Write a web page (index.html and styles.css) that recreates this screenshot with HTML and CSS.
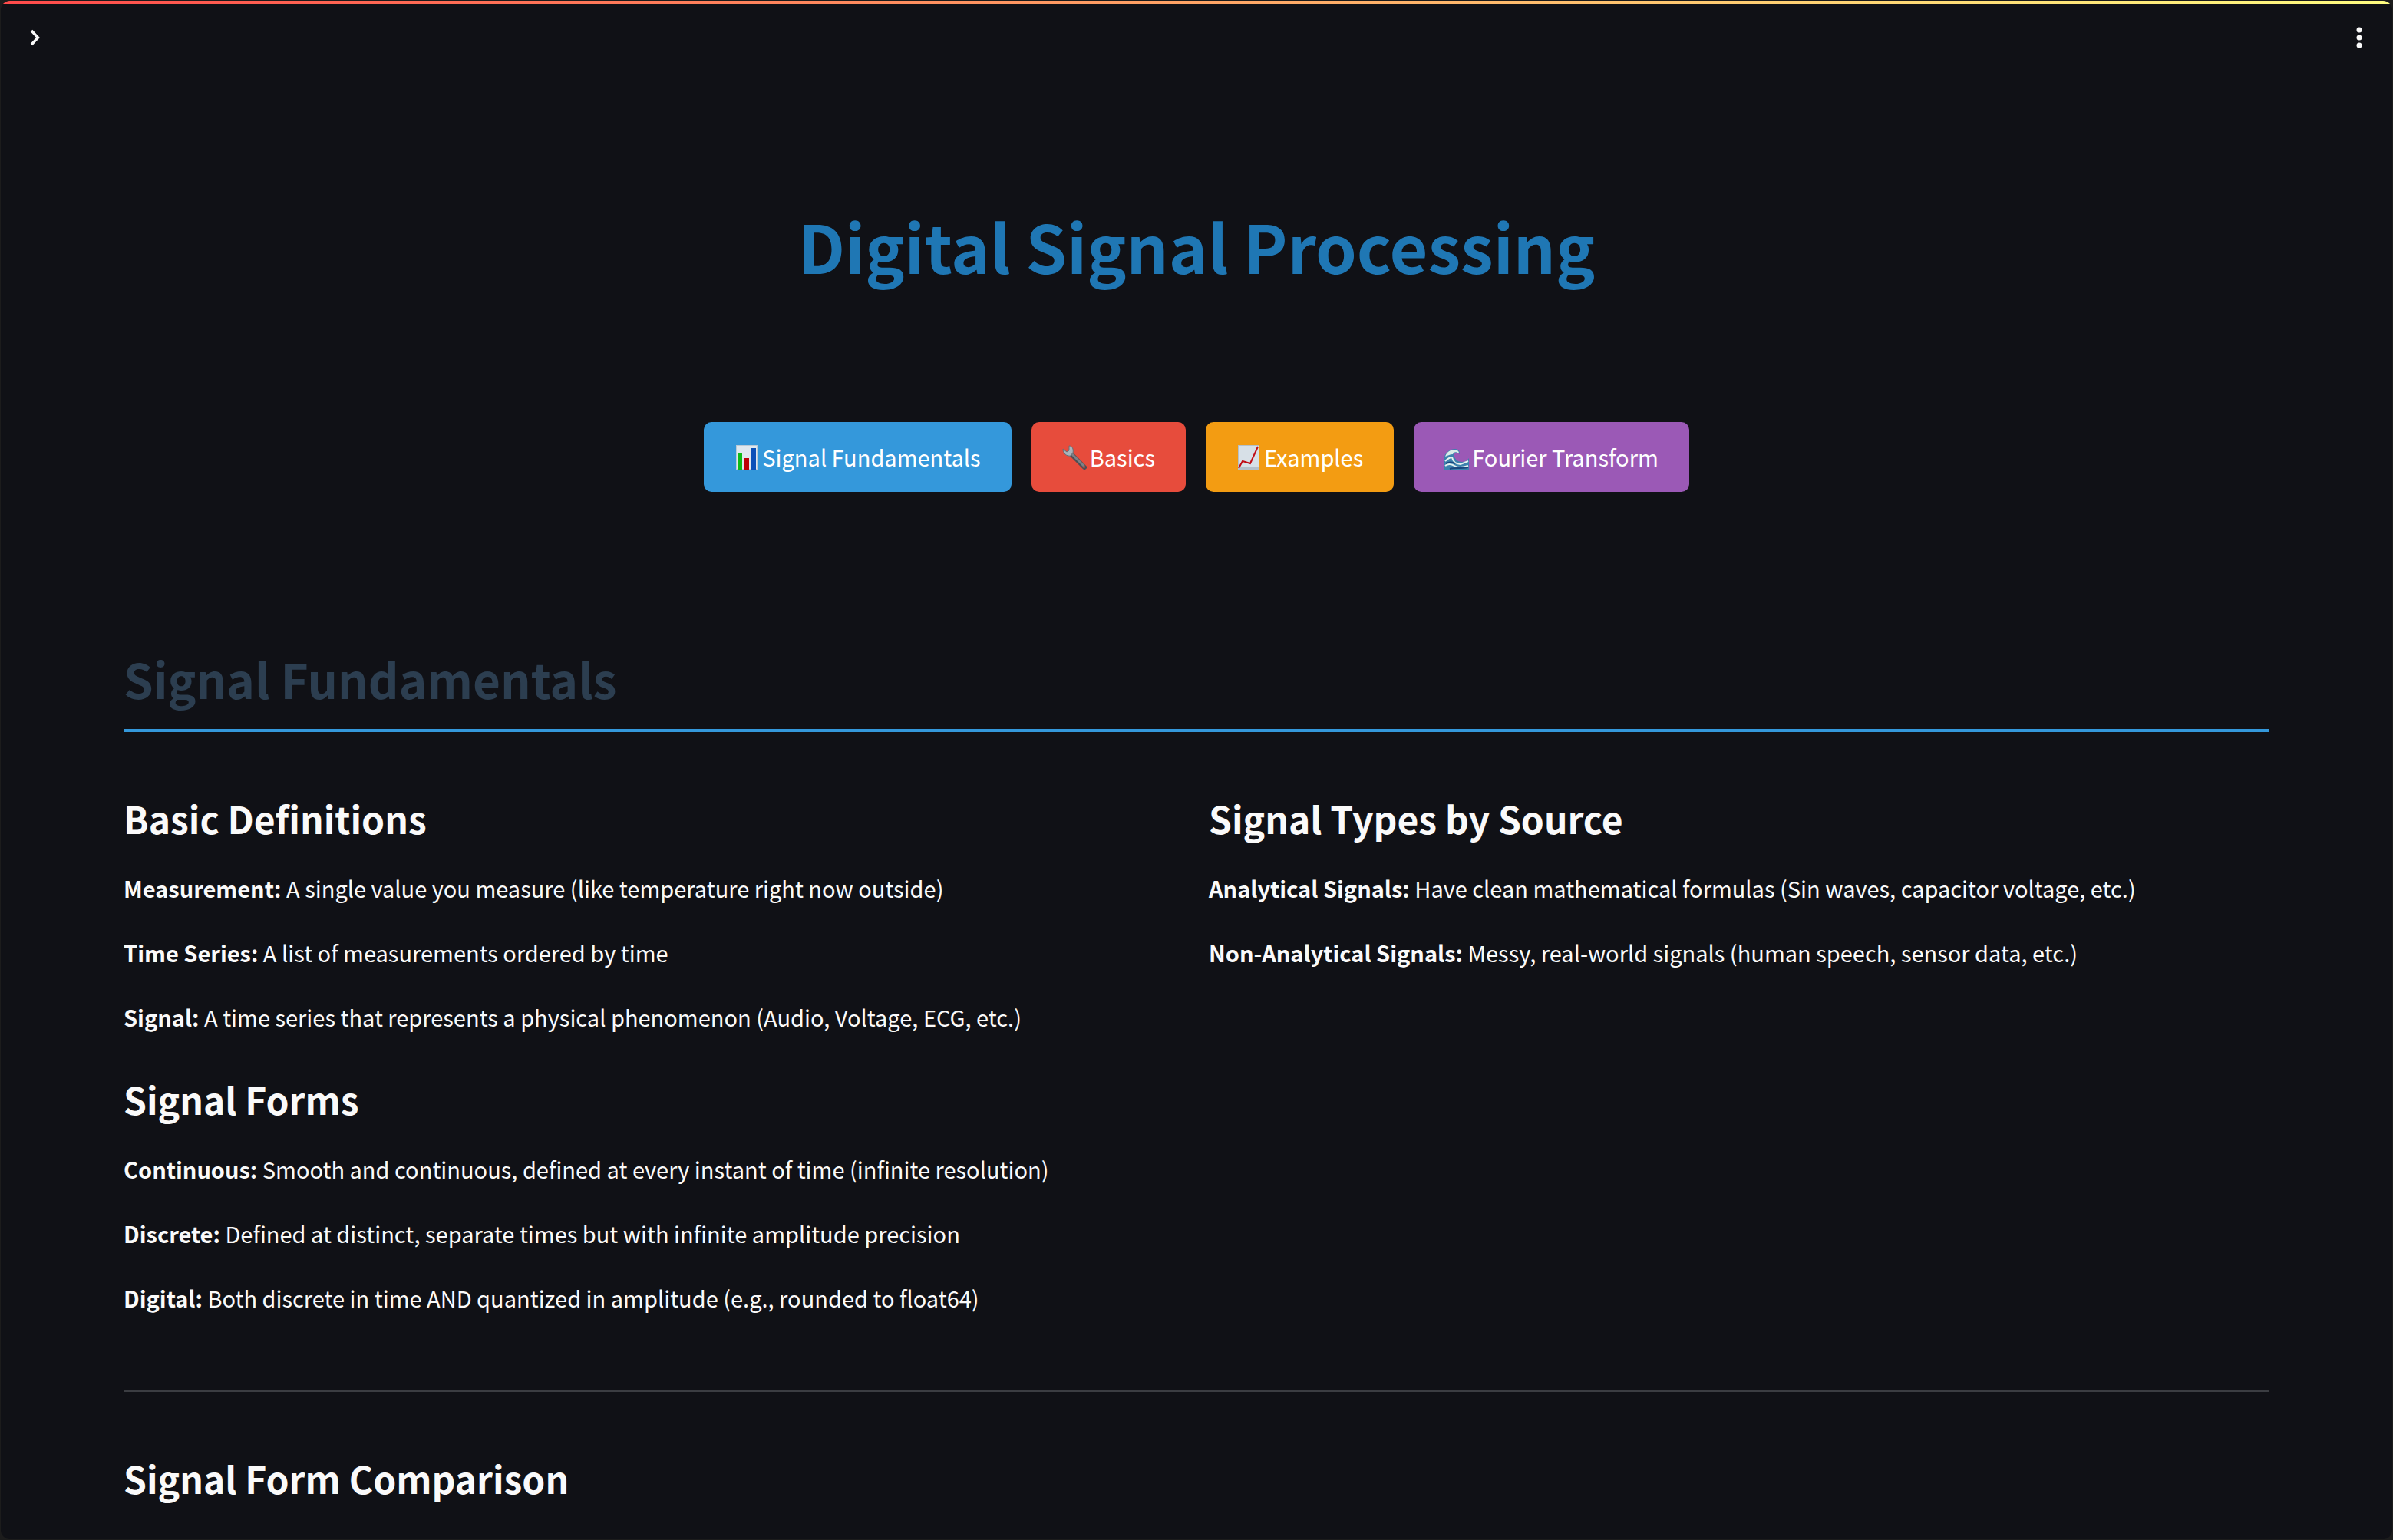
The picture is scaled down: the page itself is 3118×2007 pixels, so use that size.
FILE: index.html
```html
<!DOCTYPE html>
<html lang="en">
<head>
    <meta charset="UTF-8">
    <meta name="viewport" content="width=device-width, initial-scale=1.0">
    <title>Digital Signal Processing</title>
    <link rel="stylesheet" href="styles.css">
</head>
<body>
    <div class="app">
        <div class="decoration"></div>
        <header class="toolbar">
            <button type="button" class="icon-button" aria-label="Open sidebar">
                <svg width="40" height="40" viewBox="0 0 40 40"><path d="M17 11l8.500 9-8.500 9" fill="none" stroke="#fafafa" stroke-width="3.500"/></svg>
            </button>
            <button type="button" class="icon-button" aria-label="Main menu">
                <svg width="40" height="40" viewBox="0 0 40 40" fill="#fafafa"><circle cx="20" cy="10" r="3.500"/><circle cx="20" cy="20" r="3.500"/><circle cx="20" cy="30" r="3.500"/></svg>
            </button>
        </header>

        <main class="content">
            <h1>Digital Signal Processing</h1>

            <nav class="nav">
                <a href="#signal-fundamentals" class="nav-link blue">
                    <svg class="emoji" viewBox="0 0 32 32">
                        <rect x="2" width="28" height="32" fill="#b9c9d6"/>
                        <rect x="3" y="1" width="26" height="30" fill="#dfe8ef"/>
                        <rect x="4" y="11" width="6" height="21" fill="#0dbb17"/>
                        <rect x="13" y="17" width="6" height="15" fill="#bd0006"/>
                        <rect x="22" y="4" width="6" height="28" fill="#0b50b8"/>
                    </svg>
                    Signal Fundamentals
                </a>
                <a href="#basics" class="nav-link red">
                    <svg class="emoji" viewBox="0 0 32 32">
                        <path d="M11 11L29 29" stroke="#4c4f54" stroke-width="6" stroke-linecap="round"/>
                        <path d="M11 10L28 27" stroke="#7d8186" stroke-width="3" stroke-linecap="round"/>
                        <path d="M1 5l5 4 3-2V1c4 0 6 4 5 9l-3 4C6 15 1 11 1 5z" fill="#a9b4bb" stroke="#667078"/>
                        <circle cx="28.500" cy="28.500" r="1.500" fill="#c0493e"/>
                    </svg>
                    Basics
                </a>
                <a href="#examples" class="nav-link orange">
                    <svg class="emoji" viewBox="0 0 32 32">
                        <rect x="2" width="28" height="32" fill="#b4c0ca"/>
                        <rect x="3" y="1" width="26" height="28" fill="#d7e0e7"/>
                        <path d="M3 30l5-9 10 3L28 2" fill="none" stroke="#c00d16" stroke-width="2"/>
                    </svg>
                    Examples
                </a>
                <a href="#fourier-transform" class="nav-link purple">
                    <svg class="emoji" viewBox="0 0 32 32">
                        <path d="M0 32V15C2 9 8 5 14 5c4 0 6 3 6 7-3-3-6-3-7 0-1 5 4 10 10 10 4 0 7-2 9-5v15z" fill="#3d82ae"/>
                        <path d="M1 15C3 9 8 6 13 6c4 0 6 2 6 5-4-3-7-2-8 1-4 0-7 2-10 3z" fill="#d9ece9"/>
                        <path d="M1 21c3-3 6-5 9-5 1 5 5 9 11 9l10-4M1 27c4-3 9-2 12 0s9 3 18 0" fill="none" stroke="#e4f0ee" stroke-width="2"/>
                        <path d="M2 24c4-2 8-2 12 0M7 31c6-2 14 0 24-2" fill="none" stroke="#19477e" stroke-width="2"/>
                    </svg>
                    Fourier Transform
                </a>
            </nav>

            <h2 id="signal-fundamentals">Signal Fundamentals</h2>

            <div class="columns">
                <section>
                    <h3>Basic Definitions</h3>
                    <p><strong>Measurement:</strong> A single value you measure (like temperature right now outside)</p>
                    <p><strong>Time Series:</strong> A list of measurements ordered by time</p>
                    <p><strong>Signal:</strong> A time series that represents a physical phenomenon (Audio, Voltage, ECG, etc.)</p>
                    <h3>Signal Forms</h3>
                    <p><strong>Continuous:</strong> Smooth and continuous, defined at every instant of time (infinite resolution)</p>
                    <p><strong>Discrete:</strong> Defined at distinct, separate times but with infinite amplitude precision</p>
                    <p><strong>Digital:</strong> Both discrete in time AND quantized in amplitude (e.g., rounded to float64)</p>
                </section>
                <section>
                    <h3>Signal Types by Source</h3>
                    <p><strong>Analytical Signals:</strong> Have clean mathematical formulas (Sin waves, capacitor voltage, etc.)</p>
                    <p><strong>Non-Analytical Signals:</strong> Messy, real-world signals (human speech, sensor data, etc.)</p>
                </section>
            </div>

            <hr>

            <h3>Signal Form Comparison</h3>
        </main>
    </div>
</body>
</html>
```
FILE: styles.css
```css
* {
    box-sizing: border-box;
}
body {
    margin: 0;
    padding: 1px;
    height: 100vh;
    background-color: #1c1c1c;
    color: #fafafa;
    font-family: "Noto Sans CJK JP", "Noto Sans", sans-serif;
    font-size: 29px;
    line-height: 51px;
}
.app {
    height: 100%;
    overflow: hidden;
    border-radius: 12px;
    background-color: #101116;
}
.decoration {
    height: 4px;
    background-image: linear-gradient(90deg, #ff4b4b, #fffd80);
}
.toolbar {
    display: flex;
    justify-content: space-between;
    padding: 24px 23px;
}
.icon-button {
    display: flex;
    padding: 0;
    border: none;
    background: none;
    cursor: pointer;
}
.content {
    padding: 129px 160px 0;
}
h1, h2, h3, p {
    margin: 0;
}
h1 {
    margin-bottom: 132px;
    color: #1f77b4;
    font-size: 86px;
    line-height: 196px;
    text-align: center;
}
.nav {
    display: flex;
    justify-content: center;
    gap: 26px;
    margin-bottom: 200px;
}
.nav-link {
    display: flex;
    align-items: center;
    gap: 4px;
    padding: 20px 40px;
    border-radius: 10px;
    color: white;
    text-decoration: none;
}
.emoji {
    width: 32px;
    height: 32px;
}
.blue {
    background-color: #3498db;
}
.red {
    background-color: #e74c3c;
}
.orange {
    background-color: #f39c12;
}
.purple {
    background-color: #9b59b6;
}
h2 {
    margin-bottom: 64px;
    padding-bottom: 23px;
    border-bottom: 4px solid #3498db;
    color: #2c3e50;
    font-size: 62px;
    line-height: 86px;
}
h3 {
    padding: 15px 0 32px;
    font-size: 48px;
    line-height: 67px;
}
.columns {
    display: grid;
    grid-template-columns: 1fr 1fr;
    gap: 32px;
}
p {
    margin-bottom: 33px;
}
hr {
    height: 2px;
    margin: 62px 0 64px;
    border: none;
    background-color: #3b3d42;
}
```
